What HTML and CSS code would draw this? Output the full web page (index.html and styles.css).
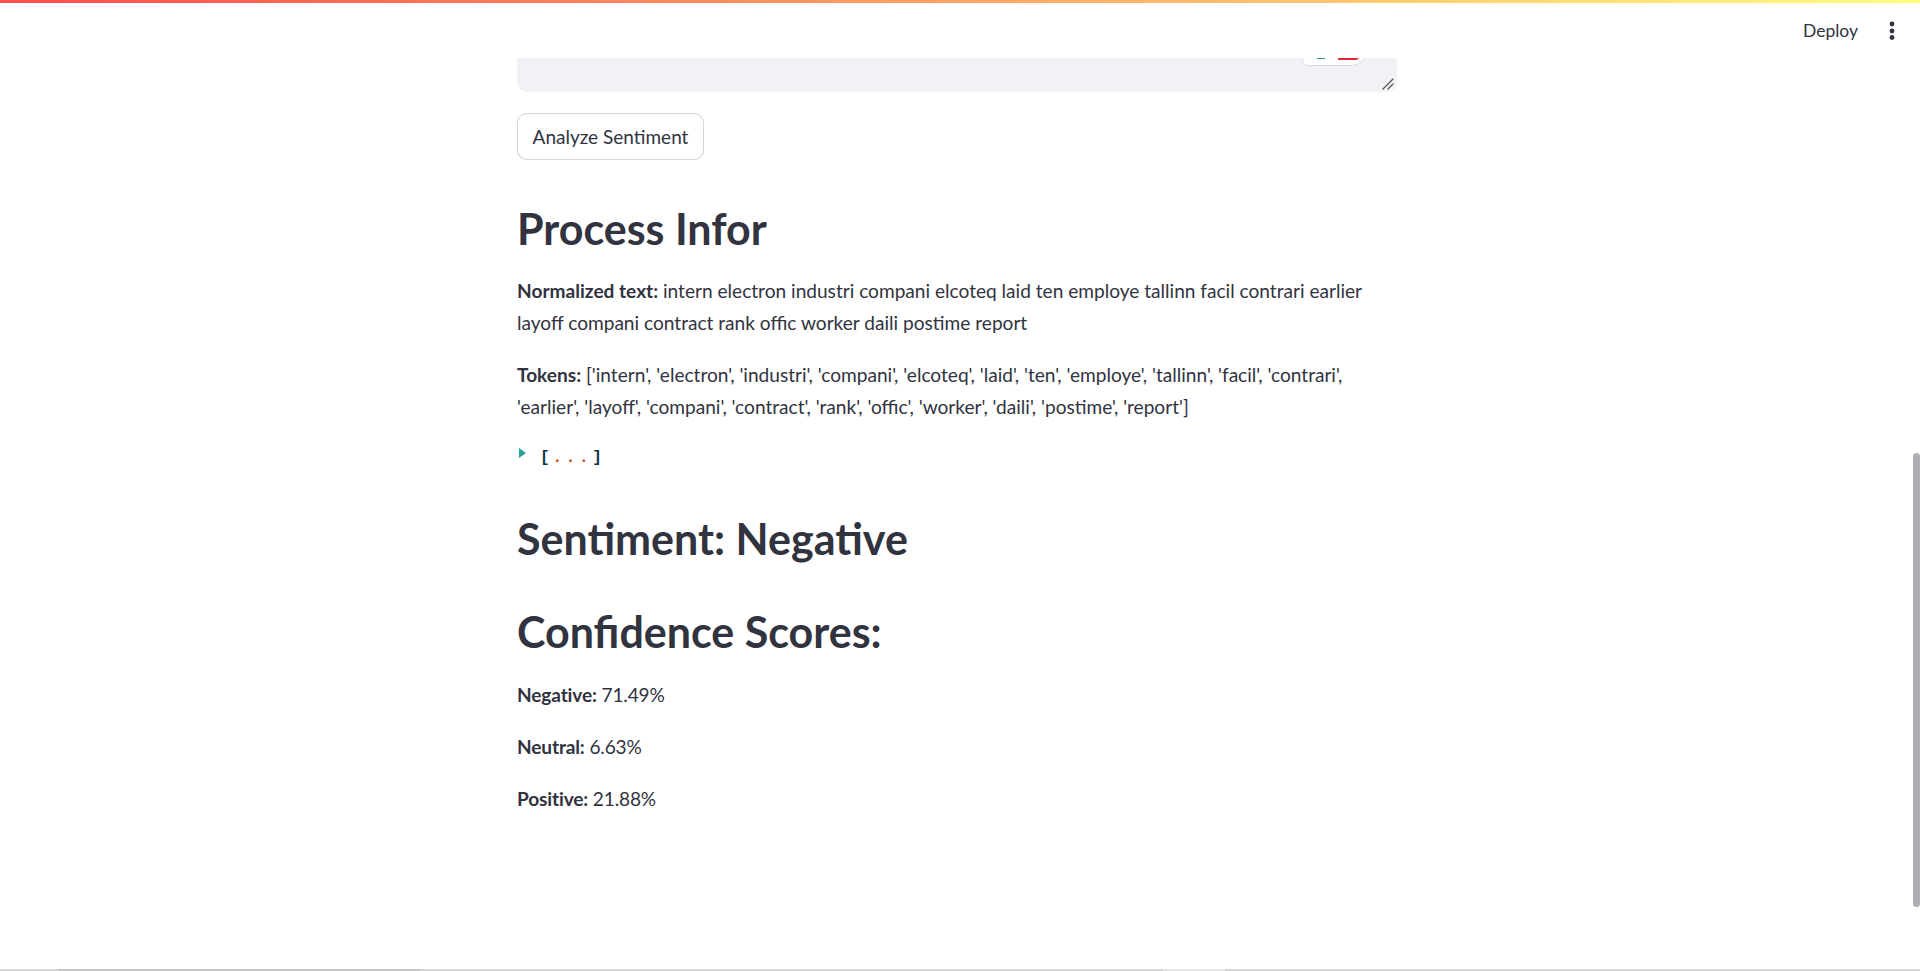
FILE: index.html
```html
<!DOCTYPE html>
<html>
<head>
<meta charset="utf-8">
<link rel="stylesheet" href="styles.css">
</head>
<body>
<header class="header">
  <div class="decoration"></div>
  <div class="toolbar">
    <span class="deploy">Deploy</span>
    <svg class="kebab" width="8" height="20" viewBox="0 0 8 20"><circle cx="4" cy="3" r="2.4" fill="#31333f"/><circle cx="4" cy="10" r="2.4" fill="#31333f"/><circle cx="4" cy="16.5" r="2.4" fill="#31333f"/></svg>
  </div>
</header>

<div class="app">
  <main class="block">
    <div class="textarea">
      <div class="badge"><span class="badge-green"></span><span class="badge-red"></span></div>
      <svg class="resize" width="12" height="12" viewBox="0 0 12 12"><path d="M1 11 L11 1 M6 11 L11 6" stroke="#5a5a5a" stroke-width="1.3" stroke-linecap="round"/></svg>
    </div>

    <button class="btn">Analyze Sentiment</button>

    <h2 class="h2 first">Process Infor</h2>
    <p class="p tight"><b>Normalized text:</b> intern electron industri compani elcoteq laid ten employe tallinn facil contrari earlier layoff compani contract rank offic worker daili postime report</p>
    <p class="p"><b>Tokens:</b> ['intern', 'electron', 'industri', 'compani', 'elcoteq', 'laid', 'ten', 'employe', 'tallinn', 'facil', 'contrari', 'earlier', 'layoff', 'compani', 'contract', 'rank', 'offic', 'worker', 'daili', 'postime', 'report']</p>

    <div class="json">
      <span class="arrow"></span>
      <span class="brk">[</span><span class="dots">...</span><span class="brk">]</span>
    </div>

    <h2 class="h2 sent">Sentiment: Negative</h2>
    <h2 class="h2 conf">Confidence Scores:</h2>
    <p class="p score"><b>Negative:</b> 71.49%</p>
    <p class="p score2"><b>Neutral:</b> 6.63%</p>
    <p class="p score2"><b>Positive:</b> 21.88%</p>
  </main>
</div>

<div class="vscroll"></div>
<div class="hscroll"><span class="hs-dark"></span><span class="hs-light"></span></div>
</body>
</html>
```

FILE: styles.css
```css
html, body {
  margin: 0;
  padding: 0;
  background: #ffffff;
  overflow: hidden;
}
body {
  font-family: "Lato", "Noto Sans", sans-serif;
  color: rgb(49, 51, 63);
  height: 971px;
}

.header {
  position: fixed;
  top: 0;
  left: 0;
  right: 0;
  height: 58px;
  background: #ffffff;
  z-index: 10;
}
.decoration {
  height: 3px;
  background: linear-gradient(90deg, rgb(255, 75, 75), rgb(255, 253, 128));
}
.toolbar {
  display: flex;
  justify-content: flex-end;
  align-items: center;
  height: 55px;
  padding-right: 24px;
  gap: 30px;
}
.deploy {
  font-size: 17.5px;
  color: rgb(49, 51, 63);
}
.kebab {
  display: block;
}

.app {
  display: flex;
  justify-content: center;
  padding-right: 6px;
}
.block {
  width: 880px;
  display: flex;
  flex-direction: column;
  align-items: flex-start;
}

.textarea {
  width: 880px;
  height: 92px;
  background: #f0f2f6;
  border-radius: 0 0 10px 10px;
  position: relative;
  flex: none;
}
.badge {
  position: absolute;
  right: 31px;
  top: 30px;
  width: 62px;
  height: 34px;
  background: #ffffff;
  border: 1px solid #dcdce0;
  border-radius: 0 0 14px 6px;
  z-index: 1;
}
.badge-green {
  position: absolute;
  left: 14px;
  bottom: 6px;
  width: 8px;
  height: 3px;
  background: #1f9d74;
}
.badge-red {
  position: absolute;
  left: 35px;
  bottom: 5px;
  width: 21px;
  height: 4px;
  border-radius: 0 0 4px 1px;
  background: #e0243a;
}
.resize {
  position: absolute;
  right: 3px;
  bottom: 2px;
}

.btn {
  margin-top: 21px;
  height: 47px;
  padding: 0;
  width: 187px;
  white-space: nowrap;
  background: #ffffff;
  border: 1px solid rgba(49, 51, 63, 0.2);
  border-radius: 10px;
  font-family: inherit;
  font-size: 19px;
  color: rgb(49, 51, 63);
  flex: none;
}

.h2 {
  margin: 0;
  padding: 20px 0;
  font-size: 43px;
  line-height: 54px;
  font-weight: 700;
  letter-spacing: 0;
  color: rgb(49, 51, 63);
}
.h2.first {
  margin-top: 20px;
  padding-top: 22px;
  padding-bottom: 18px;
}
.h2.sent {
  margin-top: 20px;
}
.h2.conf {
  margin-top: -1px;
}

.p {
  margin: 20px 0 0;
  font-size: 19.1px;
  line-height: 32px;
  letter-spacing: 0;
}
.p b {
  font-weight: 700;
}
.p.tight {
  margin-top: 1px;
}
.p.score {
  margin-top: 0;
}
.p.score, .p.score2 {
  letter-spacing: -0.15px;
}

.json {
  margin-top: 20px;
  height: 29px;
  display: flex;
  align-items: center;
  font-family: "Liberation Mono", "DejaVu Sans Mono", monospace;
  font-size: 16px;
  font-weight: 700;
}
.arrow {
  width: 0;
  height: 0;
  border-top: 5.5px solid transparent;
  border-bottom: 5.5px solid transparent;
  border-left: 7px solid #2aa198;
  margin-left: 2px;
  margin-right: 14px;
  margin-top: -9px;
}
.brk {
  color: #073642;
}
.dots {
  color: #cb4b16;
  letter-spacing: 3.6px;
  padding-left: 3px;
}

.vscroll {
  position: fixed;
  right: 0;
  top: 453px;
  width: 7px;
  height: 454px;
  border-radius: 4px;
  background: #aeaeb3;
}
.hscroll {
  position: fixed;
  left: 0;
  right: 0;
  bottom: 0;
  height: 2px;
  background: #d4d4d4;
}
.hs-dark {
  position: absolute;
  left: 59px;
  width: 361px;
  top: 0;
  bottom: 0;
  background: #c4c4c4;
}
.hs-light {
  position: absolute;
  left: 1163px;
  width: 62px;
  top: 0;
  bottom: 0;
  background: #e6e6e6;
}
```
